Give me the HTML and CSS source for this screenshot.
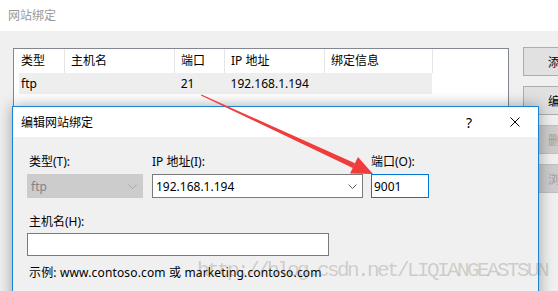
FILE: index.html
```html
<!DOCTYPE html>
<html lang="zh-CN">
<head>
    <meta charset="UTF-8">
    <title>网站绑定</title>
    <link rel="stylesheet" href="styles.css">
</head>
<body>
    <div class="screen">
        <div class="window">
            <div class="win-title">网站绑定</div>
            <div class="win-body">
                <div class="list">
                    <div class="list-head">
                        <div class="col c1">类型</div>
                        <div class="col c2">主机名</div>
                        <div class="col c3">端口</div>
                        <div class="col c4">IP 地址</div>
                        <div class="col c5">绑定信息</div>
                    </div>
                    <div class="list-row">
                        <div class="cell c1">ftp</div>
                        <div class="cell c2"></div>
                        <div class="cell c3">21</div>
                        <div class="cell c4">192.168.1.194</div>
                        <div class="cell c5"></div>
                    </div>
                </div>
                <div class="side-buttons">
                    <button class="btn">添加(A)...</button>
                    <button class="btn">编辑(E)...</button>
                    <button class="btn" disabled>删除(R)</button>
                    <button class="btn" disabled>浏览(B)</button>
                </div>
            </div>
        </div>

        <!-- edit dialog on top of the bindings window -->
        <div class="dialog">
            <div class="dlg-title">
                <span class="dlg-name">编辑网站绑定</span>
                <span class="dlg-help">?</span>
                <span class="dlg-close">
                    <svg width="10" height="10" viewBox="0 0 10 10">
                        <path d="M0.5 0.5 L9.5 9.5 M9.5 0.5 L0.5 9.5" stroke="#000" stroke-width="1" fill="none"/>
                    </svg>
                </span>
            </div>
            <div class="dlg-body">
                <div class="field-row">
                    <div class="field f-type">
                        <label>类型(T):</label>
                        <div class="combo disabled">
                            <span>ftp</span>
                            <svg class="chev" width="9" height="5" viewBox="0 0 9 5">
                                <path d="M0.5 0.5 L4.5 4.5 L8.5 0.5" stroke="#a8a8a8" fill="none"/>
                            </svg>
                        </div>
                    </div>
                    <div class="field f-ip">
                        <label>IP 地址(I):</label>
                        <div class="combo">
                            <span>192.168.1.194</span>
                            <svg class="chev" width="9" height="5" viewBox="0 0 9 5">
                                <path d="M0.5 0.5 L4.5 4.5 L8.5 0.5" stroke="#606060" fill="none"/>
                            </svg>
                        </div>
                    </div>
                    <div class="field f-port">
                        <label>端口(O):</label>
                        <div class="textbox focused">9001</div>
                    </div>
                </div>
                <div class="field f-host">
                    <label>主机名(H):</label>
                    <div class="textbox"></div>
                </div>
                <div class="example">示例: www.contoso.com 或 marketing.contoso.com</div>
            </div>
        </div>

        <svg class="arrow" width="558" height="291" viewBox="0 0 558 291">
            <polygon points="201,95.5 201.4,94.6 355,163.2 352.8,168" fill="#f03c3c"/>
            <polygon points="373,174 350,173.5 358,157" fill="#f03c3c"/>
        </svg>

        <div class="watermark">http://blog.csdn.net/LIQIANGEASTSUN</div>
    </div>
</body>
</html>
```

FILE: styles.css
```css
body {
    margin: 0;
    font-family: "Noto Sans", "Noto Sans CJK SC", sans-serif;
    font-size: 12px;
    color: #000;
}
.screen {
    position: relative;
    width: 558px;
    height: 291px;
    overflow: hidden;
    background: #f0f0f0;
}
.window {
    height: 100%;
}
.win-title {
    height: 31px;
    background: #fff;
    color: #999;
    line-height: 31px;
    padding-left: 8px;
}
.win-body {
    display: flex;
    padding: 17px 0 0 13px;
}
.list {
    width: 496px;
    height: 260px;
    flex-shrink: 0;
    box-sizing: border-box;
    border: 1px solid #828790;
    background: #fff;
}
.list-head {
    display: flex;
    height: 24px;
}
.col {
    box-sizing: border-box;
    border-right: 1px solid #e5e5e5;
    line-height: 24px;
    padding-left: 6px;
}
.list-head .c1 { width: 51px; padding-left: 7px; }
.c2 { width: 110px; }
.c3 { width: 50px; }
.c4 { width: 100px; }
.c5 { width: 108px; }
.list-row {
    display: flex;
    height: 21px;
    margin-left: 5px;
    width: 413px;
    background: #eeeeee;
}
.cell {
    box-sizing: border-box;
    line-height: 21px;
    padding-left: 6px;
}
.list-row .c1 { width: 46px; padding-left: 2px; }
.side-buttons {
    display: flex;
    flex-direction: column;
    gap: 10px;
    margin-left: 14px;
    margin-top: -1px;
}
.btn {
    width: 90px;
    height: 29px;
    box-sizing: border-box;
    border: 1px solid #adadad;
    background: #e1e1e1;
    font-family: inherit;
    font-size: 12px;
    color: #000;
    text-align: left;
    padding: 0 0 0 24px;
}
.btn:disabled {
    background: #cccccc;
    border-color: #bfbfbf;
    color: #a0a0a0;
}

.dialog {
    position: absolute;
    left: 12px;
    top: 106px;
    width: 527px;
    height: 200px;
    box-sizing: border-box;
    border: 1px solid #1883d7;
    background: #f0f0f0;
    box-shadow: 0 0 14px rgba(0, 0, 0, 0.35);
}
.dlg-title {
    height: 30px;
    background: #fff;
    display: flex;
    align-items: center;
    padding-left: 8px;
}
.dlg-name {
    flex: 1;
}
.dlg-help,
.dlg-close {
    width: 46px;
    height: 30px;
    display: flex;
    align-items: center;
    justify-content: center;
}
.dlg-help {
    font-size: 14px;
}
.dlg-body {
    padding: 17px 0 0 14px;
}
.field-row {
    display: flex;
}
.field label {
    display: block;
    height: 16px;
    line-height: 16px;
    margin-bottom: 4px;
}
.f-type { width: 116px; margin-right: 9px; }
.f-ip { width: 211px; margin-right: 8px; }
.f-port { width: 58px; }
.f-type label { padding-left: 2px; }
.combo,
.textbox {
    height: 24px;
    box-sizing: border-box;
    border: 1px solid #7a7a7a;
    background: #fff;
    display: flex;
    align-items: center;
    padding-left: 3px;
}
.combo span {
    flex: 1;
}
.chev {
    margin-right: 5px;
}
.combo.disabled {
    background: #cccccc;
    border-color: #cccccc;
    color: #838383;
}
.textbox.focused {
    border-color: #0078d7;
    padding-left: 2px;
}
.f-host {
    width: 302px;
    margin-top: 16px;
}
.f-host label {
    margin-bottom: 3px;
    padding-left: 2px;
}
.f-host .textbox {
    height: 23px;
}
.example {
    margin-top: 9px;
    line-height: 16px;
    padding-left: 2px;
    letter-spacing: 0.15px;
}

.arrow {
    position: absolute;
    left: 0;
    top: 0;
    pointer-events: none;
}
.watermark {
    position: absolute;
    left: 197px;
    top: 259px;
    font-family: "Liberation Mono", monospace;
    font-size: 21px;
    letter-spacing: -2.6px;
    line-height: 24px;
    color: rgba(120, 110, 100, 0.28);
    white-space: nowrap;
    pointer-events: none;
}
```
